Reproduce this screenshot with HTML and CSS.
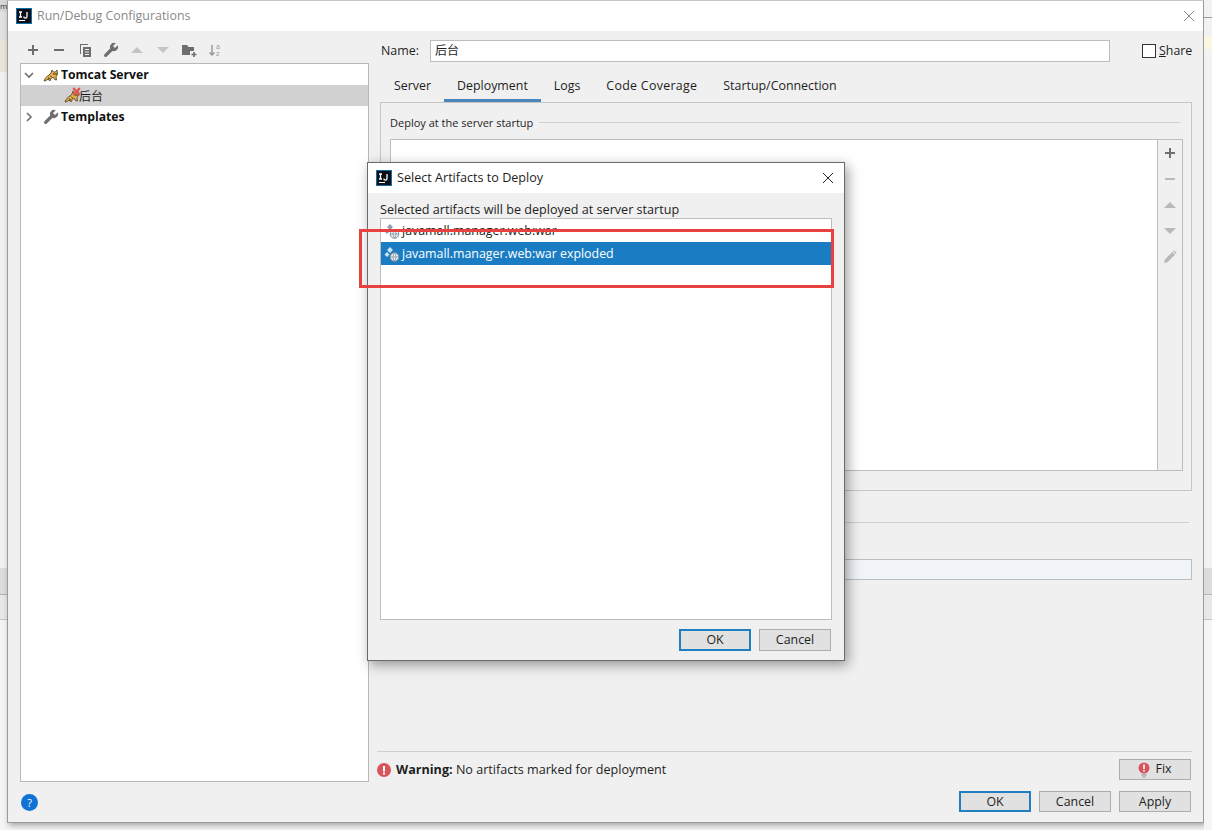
FILE: index.html
```html
<!DOCTYPE html>
<html lang="en">
<head>
<meta charset="utf-8">
<title>Run/Debug Configurations</title>
<link rel="stylesheet" href="styles.css">
</head>
<body>
<svg class="defs" width="0" height="0" aria-hidden="true">
  <defs>
    <symbol id="ij" viewBox="0 0 16 16">
      <rect x="0" y="0" width="16" height="16" fill="#0f6ea8"/>
      <rect x="1" y="1" width="14" height="14" fill="#0b0f16"/>
      <path d="M3 4h3M4.500 4v5M3 9h3M11 4v4.500a1.600 1.600 0 0 1-3.200 0" fill="none" stroke="#fff" stroke-width="1.300"/>
      <rect x="3" y="12" width="6" height="1" fill="#fff"/>
    </symbol>
    <symbol id="wrench" viewBox="0 0 16 16">
      <path d="M14.800 3.200 12 6 10 4l2.800-2.800a4.300 4.300 0 0 0-5.700 5.400L1.500 12.200a1.600 1.600 0 0 0 2.300 2.300l5.600-5.600a4.300 4.300 0 0 0 5.400-5.700z" fill="currentColor"/>
    </symbol>
    <symbol id="cat" viewBox="0 0 16 16">
      <path d="M1 14C2 11 4 9 6 8L8 6 9 3l1.500 2h2L14 3l.5 4L13 10l.5 3-2-.5-1-2-2.500.5-.5 2.500-2-.5.500-1.500-3 2z" fill="#e3b04b" stroke="#4a3a1e" stroke-width=".8"/>
      <path d="M5 10.500l1.500 1M7 8.500l1.500 1.500" stroke="#4a3a1e" stroke-width=".9"/>
      <circle cx="11" cy="7" r=".8" fill="#222"/>
      <circle cx="13" cy="7" r=".8" fill="#222"/>
    </symbol>
    <symbol id="artifact" viewBox="0 0 16 16">
      <path d="M6 1l3 3-3 3-3-3zM3 6l2.500 2.500L3 11 .5 8.500z" fill="currentColor"/>
      <circle cx="10.500" cy="11" r="4.300" fill="#e8eef4" stroke="#7d8a96"/>
      <path d="M7 11h7M10.500 7c-2 2.500-2 5.500 0 8M10.500 7c2 2.500 2 5.500 0 8" fill="none" stroke="#7d8a96" stroke-width=".7"/>
    </symbol>
    <symbol id="up" viewBox="0 0 16 16"><path d="M2 11l6-6 6 6z" fill="currentColor"/></symbol>
    <symbol id="down" viewBox="0 0 16 16"><path d="M2 5l6 6 6-6z" fill="currentColor"/></symbol>
    <symbol id="plus" viewBox="0 0 16 16"><path d="M3 8h10M8 3v10" stroke="currentColor" stroke-width="2" fill="none"/></symbol>
    <symbol id="minus" viewBox="0 0 16 16"><path d="M3 8h10" stroke="currentColor" stroke-width="2" fill="none"/></symbol>
    <symbol id="pencil" viewBox="0 0 16 16"><path d="M2 14l.8-3.500 7.500-7.500 2.700 2.700-7.500 7.500zM11 2.300l1-1 2.700 2.700-1 1z" fill="currentColor"/></symbol>
  </defs>
</svg>

<div class="page">
  <div class="sliver sliver-left">
    <div class="sl-dark">m</div>
    <div class="sl-icons"></div>
    <div class="sl-yellow"></div>
    <div class="sl-fill"></div>
    <div class="sl-band"></div>
    <div class="sl-band2"></div>
    <div class="sl-rest"></div>
  </div>

  <div class="window">
    <header class="titlebar">
      <svg class="app-icon"><use href="#ij"/></svg>
      <span class="title-muted">Run/Debug Configurations</span>
      <svg class="close close-muted" viewBox="0 0 12 12"><path d="M1 1l10 10M11 1L1 11"/></svg>
    </header>

    <div class="main">
      <aside class="side">
        <div class="toolbar">
          <svg class="tb tb-dark"><use href="#plus"/></svg>
          <svg class="tb tb-dark"><use href="#minus"/></svg>
          <svg class="tb tb-dark" viewBox="0 0 16 16"><path d="M3 2h8v1H4v9H3zM6 5h8v10H6z" fill="#6e6e6e"/><path d="M8 7.500h4M8 10h4M8 12.500h4" stroke="#f0f0f0"/></svg>
          <svg class="tb tb-dark"><use href="#wrench"/></svg>
          <svg class="tb tb-off"><use href="#up"/></svg>
          <svg class="tb tb-off"><use href="#down"/></svg>
          <svg class="tb tb-dark" viewBox="0 0 16 16"><path d="M1 3h5l1.500 2H13v4H9v4H1z" fill="#6e6e6e"/><path d="M13 10v5M10.500 12.500h5" stroke="#6e6e6e" stroke-width="1.600"/></svg>
          <svg class="tb tb-sort" viewBox="0 0 16 16"><path d="M5 3v10M2.500 10.500 5 13l2.500-2.500" stroke="#9a9a9a" stroke-width="1.500" fill="none"/><text x="9" y="7" font-size="7" fill="#9a9a9a" font-family="Liberation Sans">a</text><text x="9" y="14" font-size="7" fill="#9a9a9a" font-family="Liberation Sans">z</text></svg>
        </div>
        <div class="tree">
          <div class="row">
            <svg class="arrow" viewBox="0 0 10 10"><path d="M1 3l4 4 4-4"/></svg>
            <svg class="tree-icon"><use href="#cat"/></svg>
            <b class="row-bold">Tomcat Server</b>
          </div>
          <div class="row row-sel">
            <span class="cat-wrap">
              <svg class="tree-icon"><use href="#cat"/></svg>
              <svg class="cross" viewBox="0 0 8 8"><path d="M1 1l6 6M7 1L1 7"/></svg>
            </span>
            <span class="row-cjk">后台</span>
          </div>
          <div class="row">
            <svg class="arrow" viewBox="0 0 10 10"><path d="M3 1l4 4-4 4"/></svg>
            <svg class="tree-icon wrench-icon"><use href="#wrench"/></svg>
            <b class="row-bold">Templates</b>
          </div>
        </div>
        <div class="help-row"><span class="help">?</span></div>
      </aside>

      <section class="content">
        <div class="name-row">
          <label class="name-label">Name:</label>
          <div class="name-input">后台</div>
          <span class="checkbox"></span>
          <span class="share"><u>S</u>hare</span>
        </div>

        <nav class="tabs">
          <span class="tab">Server</span>
          <span class="tab tab-on">Deployment</span>
          <span class="tab">Logs</span>
          <span class="tab tab-wide">Code Coverage</span>
          <span class="tab">Startup/Connection</span>
        </nav>

        <div class="panel">
          <div class="legend"><span>Deploy at the server startup</span><i class="rule"></i></div>
          <div class="deploy-box">
            <div class="deploy-list"></div>
            <div class="deploy-tools">
              <svg class="dt dt-dark"><use href="#plus"/></svg>
              <svg class="dt"><use href="#minus"/></svg>
              <svg class="dt"><use href="#up"/></svg>
              <svg class="dt"><use href="#down"/></svg>
              <svg class="dt"><use href="#pencil"/></svg>
            </div>
          </div>
        </div>

        <div class="sep-line"></div>
        <div class="tint-input"></div>
        <div class="grow"></div>

        <div class="warning-line"></div>
        <div class="warning-row">
          <svg class="warn-icon" viewBox="0 0 14 14"><circle cx="7" cy="7" r="7" fill="#d9545c"/><rect x="6" y="3" width="2" height="5.500" fill="#fff"/><rect x="6" y="9.500" width="2" height="2" fill="#fff"/></svg>
          <span class="warn-text"><b>Warning:</b> No artifacts marked for deployment</span>
          <button class="btn btn-fix">
            <svg class="bulb" viewBox="0 0 12 16"><circle cx="6" cy="6" r="5.500" fill="#d9545c"/><rect x="5.200" y="2.500" width="1.600" height="4.500" fill="#fff"/><rect x="5.200" y="8" width="1.600" height="1.500" fill="#fff"/><path d="M3.500 13h5M4.500 15h3" stroke="#8a8a8a"/></svg>
            Fix
          </button>
        </div>
        <div class="actions">
          <button class="btn btn-default">OK</button>
          <button class="btn">Cancel</button>
          <button class="btn">Apply</button>
        </div>
      </section>
    </div>
  </div>

  <div class="sliver sliver-right">
    <div class="sr-top"></div>
    <div class="sr-yellow"></div>
    <div class="sr-fill"></div>
    <div class="sl-band"></div>
    <div class="sl-band2"></div>
    <div class="sl-rest"></div>
  </div>
</div>

<div class="dialog">
  <header class="dlg-title">
    <svg class="app-icon"><use href="#ij"/></svg>
    <span class="dlg-name">Select Artifacts to Deploy</span>
    <svg class="close" viewBox="0 0 12 12"><path d="M1 1l10 10M11 1L1 11"/></svg>
  </header>
  <div class="dlg-body">
    <div class="dlg-label">Selected artifacts will be deployed at server startup</div>
    <div class="dlg-list">
      <div class="art-row">
        <svg class="art-icon"><use href="#artifact"/></svg>
        <span>javamall.manager.web:war</span>
      </div>
      <div class="art-row art-sel">
        <svg class="art-icon"><use href="#artifact"/></svg>
        <span>javamall.manager.web:war exploded</span>
      </div>
    </div>
    <div class="dlg-actions">
      <button class="btn btn-default">OK</button>
      <button class="btn">Cancel</button>
    </div>
  </div>
</div>

<div class="highlight"></div>
</body>
</html>
```

FILE: styles.css
```css
* { box-sizing: border-box; }
html, body { margin: 0; padding: 0; height: 830px; overflow: hidden; }
body {
  position: relative;
  width: 1212px;
  background: #f2f2f2;
  font-family: "Open Sans", "Noto Sans CJK SC", sans-serif;
  font-size: 12.4px;
  color: #1e1e1e;
}
.defs { position: absolute; }
.page { display: flex; height: 830px; }

/* background slivers */
.sliver { display: flex; flex-direction: column; background: #f2f2f2; flex: none; overflow: hidden; }
.sliver-left { width: 7px; }
.sliver-right { width: 8px; }
.sl-dark { height: 12px; line-height: 11px; font-size: 8px; background: #d8d8d8; color: #333; white-space: nowrap; }
.sl-icons { height: 28px; background: #e2e2e2; }
.sl-yellow { height: 32px; background: #e8e6d8; }
.sl-fill { height: 496px; background: #f1f1f1; }
.sl-band { height: 27px; background: #dcdcdc; border-bottom: 1px solid #b5b5b5; }
.sl-band2 { height: 25px; background: #e8e8e8; border-bottom: 1px solid #c4c4c4; }
.sl-rest { flex: 1; background: #f5f5f5; }
.sr-top { height: 36px; background: #f2f2f2; border-top: 17px solid #f2f2f2; box-shadow: inset 0 1px 0 #9a9a9a; }
.sr-yellow { height: 13px; background: #fbf7e2; }
.sr-fill { height: 519px; background: #f2f2f2; }

/* window */
.window {
  flex: none;
  width: 1197px;
  height: 823px;
  display: flex;
  flex-direction: column;
  background: #f0f0f0;
  border: 1px solid #9b9b9b;
  border-top-color: #c8c8c8;
  box-shadow: 2px 2px 6px rgba(0, 0, 0, .35);
}
.titlebar {
  flex: none;
  height: 30px;
  background: #fff;
  display: flex;
  align-items: center;
  padding-left: 8px;
}
.app-icon { width: 16px; height: 16px; flex: none; }
.title-muted { margin-left: 5px; color: #8a8a8a; padding-bottom: 1px; }
.close { width: 12px; height: 12px; margin-left: auto; fill: none; stroke: #222; stroke-width: 1; flex: none; }
.close-muted { margin-right: 8px; stroke: #8a8a8a; }

.main { flex: 1; display: flex; min-height: 0; }

/* left column */
.side { width: 361px; flex: none; display: flex; flex-direction: column; padding-left: 12px; }
.toolbar { height: 32px; flex: none; display: flex; align-items: center; gap: 10px; padding: 6px 0 0 5px; }
.tb { width: 16px; height: 16px; flex: none; }
.tb-dark { color: #6e6e6e; }
.tb-off { color: #c4c4c4; }
.tree { flex: none; height: 719px; background: #fff; border: 1px solid #b8b8b8; }
.row { height: 21px; display: flex; align-items: center; padding-left: 3px; }
.row-sel { background: #d1d1d1; padding-left: 43px; }
.arrow { width: 10px; height: 10px; flex: none; fill: none; stroke: #6e6e6e; stroke-width: 1.600; }
.tree-icon { width: 16px; height: 16px; flex: none; margin-left: 9px; }
.wrench-icon { color: #6e6e6e; }
.row-bold { margin-left: 2px; padding-bottom: 1px; font-weight: 700; font-size: 12.200px; color: #111; }
.cat-wrap { position: relative; width: 15px; height: 16px; flex: none; display: block; }
.cat-wrap .tree-icon { margin-left: 0; display: block; }
.cross { position: absolute; right: -2px; top: -1px; width: 9px; height: 9px; fill: none; stroke: #e0554f; stroke-width: 2; }
.row-cjk { font-size: 12px; }
.help-row { flex: 1; display: flex; align-items: center; padding-left: 1px; }
.help {
  width: 17px; height: 17px; border-radius: 50%;
  background: #0f72d4; color: #fff;
  font-size: 11px; line-height: 17px; text-align: center;
}

/* right column */
.content { flex: 1; min-width: 0; display: flex; flex-direction: column; padding: 0 11px 0 11px; }
.name-row { flex: none; height: 43px; display: flex; align-items: flex-start; padding-top: 9px; }
.name-label { width: 49px; margin-left: 1px; flex: none; line-height: 21px; }
.name-input {
  width: 680px; height: 22px; flex: none;
  background: #fff; border: 1px solid #bdbdbd;
  padding-left: 4px; line-height: 19px; font-size: 12px;
}
.checkbox { width: 14px; height: 14px; margin: 4px 0 0 32px; flex: none; background: #fff; border: 1px solid #333; }
.share { margin-left: 3px; line-height: 21px; }
.tabs { flex: none; height: 28px; display: flex; padding-left: 1px; }
.tab { padding: 3px 13px 0; height: 28px; line-height: 18px; }
.tab-wide { letter-spacing: .3px; }
.tab-on { border-bottom: 3px solid #4b86b8; }
.panel {
  flex: none; height: 389px;
  border: 1px solid #c6c6c6;
  padding: 0 8px 0 9px;
  display: flex;
  flex-direction: column;
}
.legend { flex: none; height: 36px; display: flex; align-items: center; font-size: 11px; gap: 6px; padding-top: 3px; }
.rule { flex: 1; height: 1px; background: #cfcfcf; margin-right: 3px; }
.deploy-box { flex: none; height: 332px; display: flex; border: 1px solid #bdbdbd; background: #fff; }
.deploy-list { flex: 1; }
.deploy-tools {
  flex: none; width: 25px; background: #f0f0f0;
  border-left: 1px solid #bdbdbd;
  display: flex; flex-direction: column; align-items: center;
  padding-top: 5px; gap: 10px;
}
.dt { width: 16px; height: 16px; color: #b9b9b9; flex: none; }
.dt-dark { color: #6e6e6e; }
.sep-line { flex: none; height: 1px; margin: 31px 3px 0 0; background: #cfcfcf; }
.tint-input { flex: none; height: 21px; margin-top: 36px; background: #f0f3f8; border: 1px solid #bdbdbd; }
.grow { flex: 1; }
.warning-line { flex: none; height: 1px; background: #cfcfcf; margin-left: -3px; }
.warning-row { flex: none; height: 35px; display: flex; align-items: center; margin-left: -3px; padding-right: 1px; }
.warn-icon { width: 14px; height: 14px; flex: none; }
.warn-text { margin-left: 5px; font-size: 12.600px; }
.btn {
  width: 72px; height: 21px; flex: none; padding: 0;
  font-family: inherit; font-size: 12.400px; color: #1e1e1e;
  background: #e1e1e1; border: 1px solid #adadad;
  display: flex; align-items: center; justify-content: center;
  line-height: 1;
}
.btn-default { border: 2px solid #1f7fc0; }
.btn-fix { margin-left: auto; gap: 5px; }
.bulb { width: 12px; height: 16px; }
.actions { flex: none; height: 35px; display: flex; gap: 8px; padding: 4px 1px 0 0; justify-content: flex-end; }
.actions .btn { padding-top: 1px; }

/* dialog */
.dialog {
  position: absolute;
  left: 367px; top: 162px;
  width: 478px; height: 499px;
  background: #f0f0f0;
  border: 1px solid #6a6a6a;
  box-shadow: 3px 4px 12px rgba(0, 0, 0, .38);
  display: flex; flex-direction: column;
}
.dlg-title { flex: none; height: 30px; background: #fff; display: flex; align-items: center; padding: 0 10px 0 8px; }
.dlg-name { margin-left: 5px; font-size: 12.600px; padding-bottom: 1px; }
.dlg-body { flex: 1; display: flex; flex-direction: column; padding: 0 12px; min-height: 0; }
.dlg-label { flex: none; height: 25px; line-height: 18px; padding-top: 8px; font-size: 12.600px; }
.dlg-list { flex: none; height: 402px; background: #fff; border: 1px solid #bdbdbd; }
.art-row { height: 23px; display: flex; align-items: center; padding-left: 3px; line-height: 20px; }
.art-icon { width: 16px; height: 16px; flex: none; margin-right: 2px; color: #8fa0b0; }
.art-sel { background: #1a7dc4; color: #fff; }
.art-sel .art-icon { color: #cfe3f3; }
.dlg-actions { flex: none; display: flex; justify-content: flex-end; gap: 8px; padding: 9px 1px 0 0; }
.dlg-actions .btn { height: 22px; }

/* red annotation */
.highlight {
  position: absolute;
  left: 359px; top: 229px;
  width: 475px; height: 59px;
  border: 3px solid #e8413f;
  pointer-events: none;
}
```
